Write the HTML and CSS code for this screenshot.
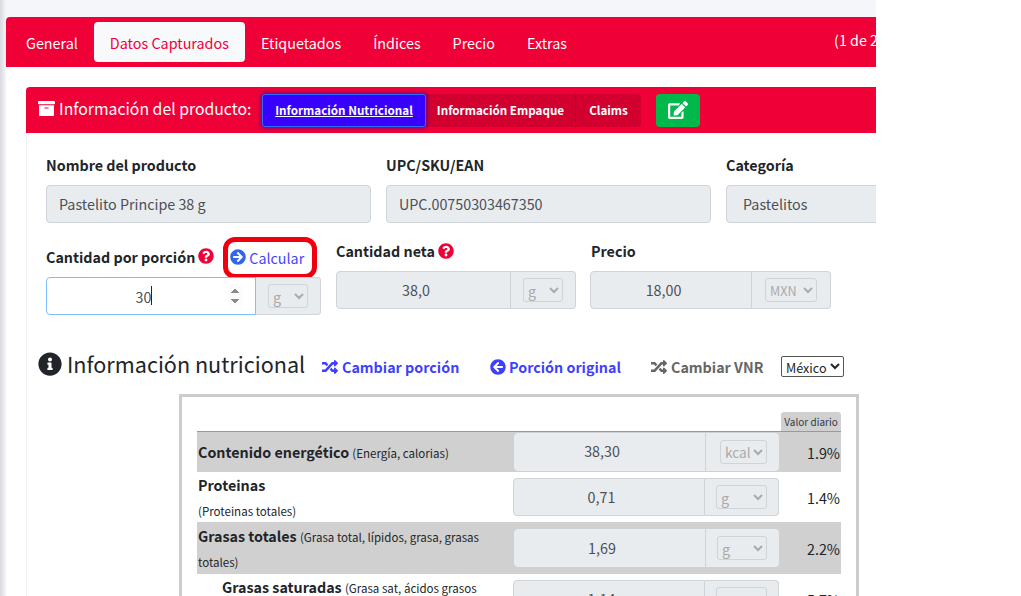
FILE: index.html
```html
<!DOCTYPE html>
<html lang="es">
<head>
<meta charset="utf-8">
<title>Datos Capturados</title>
<link rel="stylesheet" href="styles.css">
</head>
<body>
<svg class="defs" width="0" height="0" aria-hidden="true">
<symbol id="i-q" viewBox="0 0 512 512"><path d="M504 256c0 136.997-111.043 248-248 248S8 392.997 8 256C8 119.083 119.043 8 256 8s248 111.083 248 248zM262.655 90c-54.497 0-89.255 22.957-116.549 63.758-3.536 5.286-2.353 12.415 2.715 16.258l34.699 26.31c5.205 3.947 12.621 3.008 16.665-2.122 17.864-22.658 30.113-35.797 57.303-35.797 20.429 0 45.698 13.148 45.698 32.958 0 14.976-12.363 22.667-32.534 33.976C247.128 238.528 216 254.941 216 296v4c0 6.627 5.373 12 12 12h56c6.627 0 12-5.373 12-12v-1.333c0-28.462 83.186-29.647 83.186-106.667 0-58.002-60.165-102-116.531-102zM256 338c-25.365 0-46 20.635-46 46 0 25.364 20.635 46 46 46s46-20.636 46-46c0-25.365-20.635-46-46-46z"/></symbol>
<symbol id="i-info" viewBox="0 0 512 512"><path d="M256 8C119.043 8 8 119.083 8 256c0 136.997 111.043 248 248 248s248-111.003 248-248C504 119.083 392.957 8 256 8zm0 110c23.196 0 42 18.804 42 42s-18.804 42-42 42-42-18.804-42-42 18.804-42 42-42zm56 254c0 6.627-5.373 12-12 12h-88c-6.627 0-12-5.373-12-12v-24c0-6.627 5.373-12 12-12h12v-64h-12c-6.627 0-12-5.373-12-12v-24c0-6.627 5.373-12 12-12h64c6.627 0 12 5.373 12 12v100h12c6.627 0 12 5.373 12 12v24z"/></symbol>
<symbol id="i-right" viewBox="0 0 512 512"><path d="M256 8c137 0 248 111 248 248S393 504 256 504 8 393 8 256 119 8 256 8zm-28.9 143.6l75.5 72.4H120c-13.3 0-24 10.7-24 24v16c0 13.3 10.7 24 24 24h182.6l-75.5 72.4c-9.7 9.3-9.9 24.8-.4 34.3l11 10.9c9.4 9.4 24.6 9.4 33.9 0L404.3 273c9.4-9.4 9.4-24.6 0-33.9L271.6 106.3c-9.4-9.4-24.6-9.4-33.9 0l-11 10.9c-9.5 9.6-9.3 25.1.4 34.4z"/></symbol>
<symbol id="i-left" viewBox="0 0 512 512"><path d="M256 504C119 504 8 393 8 256S119 8 256 8s248 111 248 248-111 248-248 248zm28.9-143.6L209.4 288H392c13.3 0 24-10.7 24-24v-16c0-13.3-10.7-24-24-24H209.4l75.5-72.4c9.7-9.3 9.9-24.8.4-34.3l-11-10.9c-9.4-9.4-24.6-9.4-33.9 0L107.7 239c-9.4 9.4-9.4 24.6 0 33.9l132.7 132.7c9.4 9.4 24.6 9.4 33.9 0l11-10.9c9.5-9.5 9.3-25-.4-34.3z"/></symbol>
<symbol id="i-random" viewBox="0 0 512 512"><path d="M504.971 359.029c9.373 9.373 9.373 24.569 0 33.941l-80 79.984c-15.01 15.01-40.971 4.49-40.971-16.971V416h-58.785a12.004 12.004 0 0 1-8.773-3.812l-70.556-75.596 53.333-57.143L352 336h32v-39.981c0-21.438 25.943-31.998 40.971-16.971l80 79.981zM12 176h84l52.781 56.551 53.333-57.143-70.556-75.596A11.999 11.999 0 0 0 122.785 96H12c-6.627 0-12 5.373-12 12v56c0 6.627 5.373 12 12 12zm372 0v39.984c0 21.46 25.961 31.98 40.971 16.971l80-79.984c9.373-9.373 9.373-24.569 0-33.941l-80-79.981C409.943 24.021 384 34.582 384 56.019V96h-58.785a12.004 12.004 0 0 0-8.773 3.812L96 336H12c-6.627 0-12 5.373-12 12v56c0 6.627 5.373 12 12 12h110.785c3.326 0 6.503-1.381 8.773-3.812L352 176h32z"/></symbol>
<symbol id="i-archive" viewBox="0 0 512 512"><path d="M32 448c0 17.7 14.3 32 32 32h384c17.7 0 32-14.3 32-32V160H32v288zm160-212c0-6.6 5.4-12 12-12h104c6.6 0 12 5.4 12 12v8c0 6.6-5.4 12-12 12H204c-6.6 0-12-5.4-12-12v-8zM480 32H32C14.3 32 0 46.3 0 64v48c0 8.8 7.2 16 16 16h480c8.8 0 16-7.2 16-16V64c0-17.7-14.3-32-32-32z"/></symbol>
<symbol id="i-edit" viewBox="0 0 576 512"><path d="M402.6 83.2l90.2 90.2c3.8 3.8 3.8 10 0 13.8L274.4 405.6l-92.8 10.3c-12.4 1.4-22.9-9.1-21.5-21.5l10.3-92.8L388.8 83.2c3.8-3.8 10-3.8 13.8 0zm162-22.9l-48.8-48.8c-15.2-15.2-39.9-15.2-55.2 0l-35.4 35.4c-3.8 3.8-3.8 10 0 13.8l90.2 90.2c3.8 3.8 10 3.8 13.8 0l35.4-35.4c15.2-15.3 15.2-40 0-55.2zM384 346.2V448H64V128h229.8c3.2 0 6.2-1.3 8.5-3.5l40-40c7.6-7.6 2.2-20.5-8.5-20.5H48C21.5 64 0 85.5 0 112v352c0 26.5 21.5 48 48 48h352c26.5 0 48-21.5 48-48V306.2c0-10.7-12.9-16-20.5-8.5l-40 40c-2.2 2.3-3.5 5.3-3.5 8.5z"/></symbol>
</svg>
<div class="viewport">
  <div class="main-card">
    <nav class="tabs">
      <a class="tab">General</a>
      <a class="tab tab-active">Datos Capturados</a>
      <a class="tab">Etiquetados</a>
      <a class="tab">Índices</a>
      <a class="tab">Precio</a>
      <a class="tab">Extras</a>
      <span class="pager">(1 de 2)</span>
    </nav>
    <div class="main-body">
      <section class="inner-card">
        <header class="inner-head">
          <svg class="ic-archive"><use href="#i-archive"/></svg>
          <h3 class="inner-title">Información del producto:</h3>
          <div class="btn-group">
            <a class="seg seg-active">Información Nutricional</a>
            <a class="seg seg-mid">Información Empaque</a>
            <a class="seg seg-last">Claims</a>
          </div>
          <a class="btn-edit"><svg class="ic-edit"><use href="#i-edit"/></svg></a>
        </header>
        <div class="inner-body">
          <div class="row-top">
            <div class="field f-nombre">
              <label class="lbl">Nombre del producto</label>
              <div class="ctl">Pastelito Principe 38 g</div>
            </div>
            <div class="field f-upc">
              <label class="lbl">UPC/SKU/EAN</label>
              <div class="ctl">UPC.00750303467350</div>
            </div>
            <div class="field f-cat">
              <label class="lbl">Categoría</label>
              <div class="ctl ctl-cat">Pastelitos</div>
            </div>
          </div>
          <div class="row-mid">
            <div class="field f-porcion">
              <div class="lbl-line">
                <label class="lbl">Cantidad por porción</label>
                <svg class="ic-q"><use href="#i-q"/></svg>
                <a class="calc"><svg class="ic-calc"><use href="#i-right"/></svg>Calcular</a>
              </div>
              <div class="group g-porcion">
                <input class="num" type="number" value="30" autofocus>
                <span class="caret"></span>
                <div class="addon"><select class="unit u-g" disabled><option>g</option></select></div>
              </div>
            </div>
            <div class="field f-neta">
              <div class="lbl-line2">
                <label class="lbl">Cantidad neta</label>
                <svg class="ic-q"><use href="#i-q"/></svg>
              </div>
              <div class="group g-neta">
                <div class="val">38,0</div>
                <div class="addon"><select class="unit u-g" disabled><option>g</option></select></div>
              </div>
            </div>
            <div class="field f-precio">
              <div class="lbl-line2"><label class="lbl">Precio</label></div>
              <div class="group g-precio">
                <div class="val">18,00</div>
                <div class="addon"><select class="unit u-mxn" disabled><option>MXN</option></select></div>
              </div>
            </div>
          </div>
          <div class="nutri-head">
            <svg class="ic-info"><use href="#i-info"/></svg>
            <h2 class="nutri-title">Información nutricional</h2>
            <a class="act act-1"><svg class="ic-act"><use href="#i-random"/></svg>Cambiar porción</a>
            <a class="act act-2"><svg class="ic-act"><use href="#i-left"/></svg>Porción original</a>
            <a class="act act-3"><svg class="ic-act"><use href="#i-random"/></svg>Cambiar VNR</a>
            <select class="pais"><option>México</option></select>
          </div>
          <div class="tbl-box">
            <div class="vd-line"><span class="vd">Valor diario</span></div>
            <div class="tr tr-g tr-1">
              <div class="td-name"><b>Contenido energético</b> <small>(Energía, calorias)</small></div>
              <div class="group t-group t-flat">
                <div class="val">38,30</div>
                <div class="addon"><select class="unit u-kcal" disabled><option>kcal</option></select></div>
              </div>
              <div class="td-pct">1.9%</div>
            </div>
            <div class="tr tr-2">
              <div class="td-name td-two"><b>Proteinas</b><br><small>(Proteinas totales)</small></div>
              <div class="group t-group">
                <div class="val">0,71</div>
                <div class="addon"><select class="unit u-t" disabled><option>g</option></select></div>
              </div>
              <div class="td-pct">1.4%</div>
            </div>
            <div class="tr tr-g tr-3">
              <div class="td-name td-two"><b>Grasas totales</b> <small>(Grasa total, lípidos, grasa, grasas totales)</small></div>
              <div class="group t-group t-flat">
                <div class="val">1,69</div>
                <div class="addon"><select class="unit u-t" disabled><option>g</option></select></div>
              </div>
              <div class="td-pct">2.2%</div>
            </div>
            <div class="tr tr-4">
              <div class="td-name td-two td-sub"><b>Grasas saturadas</b> <small>(Grasa sat, ácidos grasos saturados)</small></div>
              <div class="group t-group">
                <div class="val">1,14</div>
                <div class="addon"><select class="unit u-t" disabled><option>g</option></select></div>
              </div>
              <div class="td-pct">5.7%</div>
            </div>
          </div>
        </div>
      </section>
    </div>
  </div>
</div>
</body>
</html>
```
FILE: styles.css
```css
* { box-sizing: border-box; }
html, body { margin: 0; height: 596px; overflow: hidden; background: #fff; }
body { font-family: "Noto Sans CJK JP", "Noto Sans", sans-serif; font-size: 14.3px; color: #212529; }
.defs { position: absolute; }
.viewport {
  width: 876px; height: 596px; overflow: hidden;
  background: linear-gradient(90deg, #d8d9dc 0, #f4f6f9 6px);
  background-color: #f4f6f9;
  padding: 17px 0 0 6px;
}
.main-card { width: 1000px; height: 600px; background: #fff; border-radius: 4px 0 0 0; }
.tabs {
  display: flex; height: 50px; padding: 5px 4px; background: #ef0037;
  border-radius: 4px 0 0 0; align-items: stretch; position: relative;
}
.tab { padding: 0 16px; font-size: 14.35px; line-height: 42px; color: #fff; border-radius: 4px; white-space: nowrap; }
.tab-active { background: #f8f9fa; color: #ef0037; }
.pager { color: #fff; margin-left: 251px; line-height: 36px; white-space: nowrap; }
.main-body { padding: 20px 0 0 20px; background: linear-gradient(90deg, #f7f7f7 0, #fff 1px); }
.inner-card { width: 980px; border-left: 1px solid #f1f1f1; }
.inner-head {
  display: flex; align-items: center; height: 46px; margin-left: -1px;
  padding: 0 0 0 12px; background: #ef0037; border-radius: 4px 0 0 0; color: #fff;
}
.ic-archive { width: 17px; height: 17px; fill: #fff; margin-right: 4px; margin-top: -4px; }
.inner-title { margin: -3px 11px 0 0; font-size: 15.8px; font-weight: 400; line-height: 26px; white-space: nowrap; width: 192px; }
.btn-group { display: flex; height: 33px; }
.seg {
  display: flex; align-items: center; justify-content: center; font-size: 11.65px; font-weight: 700;
  color: #fff; background: #d1002f; line-height: 18px; white-space: nowrap;
}
.seg-active {
  width: 164px; background: #3700ff; border: 1px solid #2e6bff; border-radius: 3px;
  text-decoration: underline; box-shadow: 0 0 3px 2px rgba(55,0,160,.5); position: relative;
}
.seg-mid { width: 150px; border-right: 1px solid #b5002a; }
.seg-last { width: 65px; border-radius: 0 4px 4px 0; }
.btn-edit {
  display: flex; align-items: center; justify-content: center;
  width: 44px; height: 33px; margin-left: 15px; background: #00b94a; border-radius: 4px;
}
.ic-edit { width: 20px; height: 18px; fill: #fff; }
.inner-body { padding: 20px 0 0 19px; }
.row-top { display: flex; gap: 15px; }
.field { flex: none; }
.f-nombre, .f-upc { width: 325px; }
.f-cat { width: 340px; }
.lbl { display: block; font-weight: 700; line-height: 24px; white-space: nowrap; }
.ctl {
  height: 38px; margin-top: 8px; padding: 0 12px; line-height: 36px; color: #495057;
  background: #e9ecef; border: 1px solid #ced4da; border-radius: 4px; white-space: nowrap;
}
.ctl-cat { padding-left: 16px; }
.row-mid { display: flex; margin-top: 14px; height: 115px; }
.f-porcion { width: 275px; margin-right: 15px; }
.lbl-line { display: flex; align-items: flex-start; height: 40px; }
.lbl-line .lbl { margin-right: 3px; margin-top: 8px; }
.lbl-line .ic-q { margin-top: 11px; }
.ic-q { width: 16px; height: 16px; fill: #ef0037; flex: none; }
.calc {
  display: flex; align-items: center; gap: 3px; width: 94px; height: 42px; margin-left: 9px;
  padding: 0 0 2px 2px; color: #4444ff; border: 5px solid #f0000f; border-radius: 12px; white-space: nowrap;
}
.ic-calc { width: 16px; height: 16px; fill: #3366e8; flex: none; }
.group { display: flex; height: 38px; position: relative; }
.num {
  flex: none; width: 210px; height: 38px; padding: 0 12px; text-align: center;
  font: inherit; color: #495057; background: #fff; border: 1px solid #80bdff; border-radius: 4px 0 0 4px; outline: 0;
}
.caret { position: absolute; left: 105px; top: 9px; width: 1px; height: 19px; background: #212529; }
.val {
  flex: 1; min-width: 0; text-align: center; line-height: 36px; padding-right: 15px; color: #495057;
  background: #e9ecef; border: 1px solid #ced4da; border-radius: 4px 0 0 4px;
}
.addon {
  flex: none; display: flex; align-items: center; padding: 0 12px;
  background: #e9ecef; border: 1px solid #ced4da; border-left: 0; border-radius: 0 4px 4px 0;
}
.g-porcion .addon { width: 65px; padding-left: 12px; }
.unit { font: inherit; font-size: 14.3px; height: 24px; padding: 0; background: transparent; color: #aaa; border: 1px solid #ced4da; border-radius: 3px; opacity: 1; }
.u-g { width: 40px; }
.u-mxn { width: 52px; font-size: 12.6px; }
.u-kcal { width: 47px; margin-left: 3px; font-size: 13.6px; }
.u-t { width: 51px; }
.f-neta { width: 240px; margin-right: 14px; }
.f-precio { width: 241px; }
.lbl-line2 { display: flex; align-items: center; gap: 3px; height: 34px; padding-bottom: 6px; }
.f-precio .lbl { padding-left: 1px; }
.g-neta .addon { width: 65px; }
.g-precio .val { width: 162px; flex: none; }
.g-precio .addon { width: 79px; padding: 0 13px 0 0; justify-content: flex-end; }
.nutri-head { display: flex; align-items: center; height: 40px; margin-left: -8px; margin-top: -8px; }
.ic-info { width: 24px; height: 24px; fill: #212529; flex: none; margin-right: 5px; }
.nutri-title { margin: 0 18px 0 0; font-size: 21.6px; font-weight: 400; line-height: 30px; white-space: nowrap; width: 237px; }
.act { display: flex; align-items: center; gap: 3px; font-weight: 700; line-height: 20px; margin-top: 5px; color: #3f3fff; white-space: nowrap; }
.ic-act { width: 16px; height: 16px; fill: #3f3fff; flex: none; }
.act-1 { width: 168px; gap: 4px; }
.act-2 { width: 161px; }
.act-3 { width: 130px; gap: 4px; color: #666; }
.act-3 .ic-act { fill: #666; }
.pais { width: 63px; height: 21px; margin-top: 4px; font: inherit; font-size: 12.6px; padding: 0; background: #fff; color: #212529; border: 1px solid #555; border-radius: 2px; }
.tbl-box {
  width: 680px; height: 300px; margin: 10px 0 0 133px; padding: 15px 15px 0 15px; border: 3px solid #ccc;
}
.vd-line { display: flex; justify-content: flex-end; height: 19px; }
.vd { width: 60px; text-align: center; font-size: 10px; line-height: 19px; background: #d0d0d0; border-radius: 3px 3px 0 0; color: #343a40; white-space: nowrap; }
.tr { display: grid; grid-template-columns: 316px 268px 60px; align-items: center; }
.tr-g { background: #d0d0d0; }
.tr-1 { height: 41px; border-top: 1px solid #999; }
.tr-2 { height: 50px; }
.tr-3 { height: 52px; }
.tr-4 { height: 50px; }
.td-name { padding-left: 1px; line-height: 20px; }
.td-name b { font-weight: 700; }
.td-name small { font-size: 11.55px; line-height: 12px; }
.td-two { line-height: 25px; }
.td-sub { padding-left: 25px; }
.td-pct { text-align: right; padding-right: 1px; color: #212529; }
.t-group { width: 266px; }
.t-flat { width: 265px; margin-left: 1px; }
.t-flat .val, .t-flat .addon { border-color: #e9ecef; }
.t-flat .addon { border-left: 1px solid #ced4da; }
.tr-1 .val { line-height: 34px; }
.t-group .addon { width: 74px; padding: 0 11px; }
```
